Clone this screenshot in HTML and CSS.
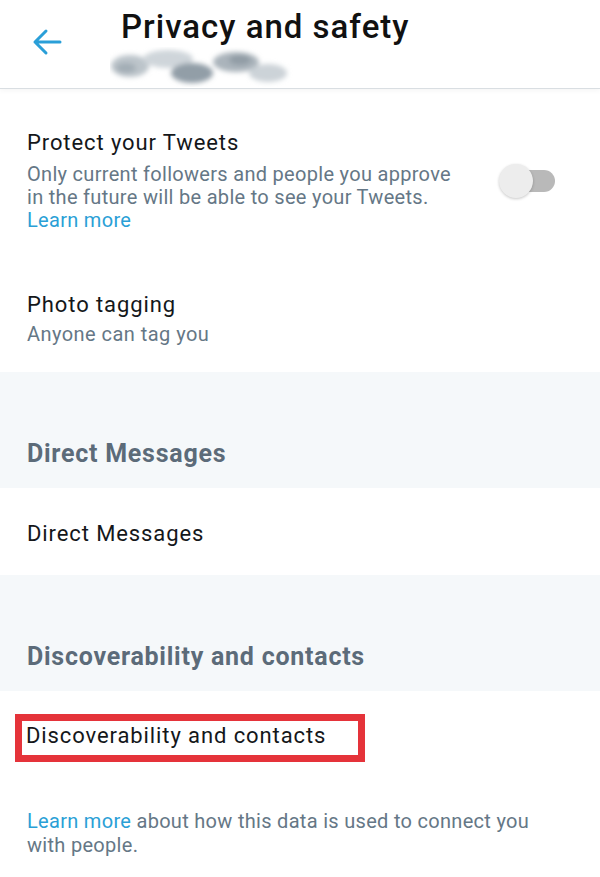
FILE: index.html
```html
<!DOCTYPE html>
<html lang="en">
<head>
<meta charset="utf-8">
<title>Privacy and safety</title>
<link rel="stylesheet" href="styles.css">
</head>
<body>
<header class="topbar">
  <svg class="back" width="30" height="30" viewBox="0 0 30 30" aria-hidden="true">
    <path d="M28 15 H3 M14 4 L3 15 L14 26" fill="none" stroke="#2a9fd8" stroke-width="3" stroke-linecap="round" stroke-linejoin="round"/>
  </svg>
  <div class="titles">
    <h1 class="title">Privacy and safety</h1>
    <svg class="blur" width="184" height="40" viewBox="0 0 184 40" aria-hidden="true">
      <defs><filter id="b" x="-30%" y="-60%" width="160%" height="220%"><feGaussianBlur stdDeviation="2.6"/></filter></defs>
      <g filter="url(#b)">
        <ellipse cx="20" cy="19" rx="19" ry="11" fill="#bcc4ca"/>
        <ellipse cx="16" cy="21" rx="10" ry="5" fill="#a3adb5"/>
        <ellipse cx="58" cy="12" rx="25" ry="9" fill="#cfd5da"/>
        <ellipse cx="82" cy="26" rx="21" ry="10" fill="#929ea7"/>
        <ellipse cx="126" cy="15" rx="23" ry="10" fill="#aab4bb"/>
        <ellipse cx="130" cy="13" rx="11" ry="5" fill="#919ca5"/>
        <ellipse cx="158" cy="26" rx="19" ry="9" fill="#ccd3d8"/>
      </g>
    </svg>
  </div>
</header>

<main>
  <section class="item item-protect">
    <div class="item-text">
      <div class="item-title">Protect your Tweets</div>
      <p class="item-desc">Only current followers and people you approve in the future will be able to see your Tweets. <a class="link" href="#">Learn more</a></p>
    </div>
    <div class="toggle"><span class="track"></span><span class="thumb"></span></div>
  </section>

  <section class="item item-photo">
    <div class="item-title">Photo tagging</div>
    <div class="item-sub">Anyone can tag you</div>
  </section>

  <h2 class="band">Direct Messages</h2>

  <section class="item item-dm">
    <div class="item-title">Direct Messages</div>
  </section>

  <h2 class="band">Discoverability and contacts</h2>

  <section class="item item-disc">
    <span class="item-title highlight">Discoverability and contacts</span>
  </section>

  <p class="footnote"><a class="link" href="#">Learn more</a> about how this data is used to connect you with people.</p>
</main>
</body>
</html>
```

FILE: styles.css
```css
* { box-sizing: border-box; }
html, body { margin: 0; padding: 0; background: #ffffff; }
body {
  font-family: Roboto, "Liberation Sans", Arial, sans-serif;
  color: #14171a;
  width: 600px;
}

.topbar {
  height: 89px;
  display: flex;
  align-items: flex-start;
  padding-left: 32px;
  border-bottom: 1px solid #d9dee2;
  box-shadow: 0 2px 5px rgba(0, 0, 0, 0.04);
}
.back { margin-top: 27px; flex: none; }
.titles { margin-left: 59px; padding-top: 7px; display: flex; flex-direction: column; }
.title {
  margin: 0;
  font-size: 33px;
  line-height: 40px;
  font-weight: 500;
  letter-spacing: 1px;
  color: #111;
}
.blur { margin-left: -11px; margin-top: 0; }

.link { color: #2a9fd6; text-decoration: none; }

.item { padding-left: 27px; }
.item-title { font-size: 22px; line-height: 28px; letter-spacing: 0.9px; color: #14171a; }
.item-desc, .item-sub { margin: 0; font-size: 20px; line-height: 23px; letter-spacing: 0.3px; color: #657786; }

.item-protect {
  display: flex;
  align-items: center;
  padding-top: 40px;
  padding-right: 45px;
  padding-bottom: 30px;
}
.item-text { flex: 1; }
.item-protect .item-desc { margin-top: 6px; max-width: 440px; }

.toggle {
  position: relative;
  width: 56px;
  height: 34px;
  flex: none;
}
.track {
  position: absolute;
  left: 8px; right: 0; top: 6px;
  height: 22px;
  border-radius: 11px;
  background: #b9b9b9;
}
.thumb {
  position: absolute;
  left: 0; top: 0;
  width: 34px; height: 34px;
  border-radius: 50%;
  background: #ededed;
  box-shadow: 0 1px 3px rgba(0, 0, 0, 0.22);
}

.item-photo { padding-top: 29px; padding-bottom: 26px; }
.item-photo .item-sub { margin-top: 4px; letter-spacing: 0.45px; }

.band {
  margin: 0;
  height: 116px;
  padding: 67px 0 0 27px;
  background: #f5f8fa;
  font-size: 25px;
  line-height: 30px;
  font-weight: 700;
  letter-spacing: 0.75px;
  color: #5c6b79;
}

.item-dm { padding-top: 32px; padding-bottom: 27px; }

.item-disc { padding: 23px 0 0 15px; }
.highlight {
  display: inline-block;
  border: 7px solid #e5333a;
  padding: 1px 32px 5px 4px;
}

.footnote {
  margin: 47px 0 0;
  padding: 0 40px 0 27px;
  font-size: 20px;
  line-height: 24px;
  letter-spacing: 0.3px;
  color: #657786;
}
```
